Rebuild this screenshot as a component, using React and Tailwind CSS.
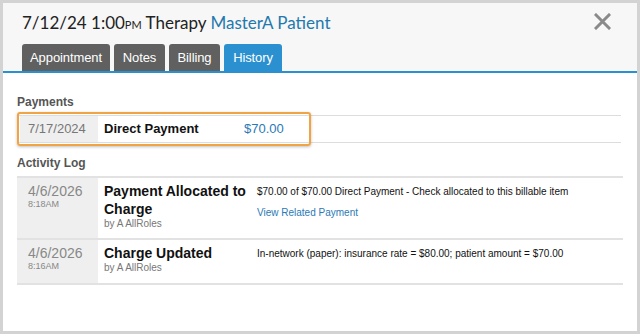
import React from "react";

const tabs = [
  ["Appointment", "w-[88px]"],
  ["Notes", "w-[51px]"],
  ["Billing", "w-[51px]"],
  ["History", "w-[58px]"],
];

export default function App() {
  return (
    <div className="w-[640px] h-[334px] border-[3px] border-[#d3d3d3] bg-white flex flex-col overflow-hidden" style={{ fontFamily: '"Liberation Sans", Arial, sans-serif' }}>
      <div className="bg-[#f7f7f7] h-[70px] shrink-0 border-b-2 border-[#2b90d0] flex flex-col px-[19px] relative">
        <div className="pt-[8px] h-[41px] text-[17px] text-[#222] leading-[24px]" style={{ fontFamily: 'Lato, sans-serif' }}>
          7/12/24 1:00<span className="text-[11px]">PM</span> Therapy <span className="text-[#2379ad]">MasterA Patient</span>
        </div>
        <div className="flex gap-[4px] items-end h-[27px]">
          {tabs.map(([t, w]) => (
            <div
              key={t}
              className={`${w} h-[27px] rounded-t-[3px] text-white text-[13px] tracking-[-0.1px] flex items-center justify-center ${t === "History" ? "bg-[#2b90d0]" : "bg-[#606060]"}`}
            >
              {t}
            </div>
          ))}
        </div>
        <svg className="absolute right-[26px] top-[10px]" width="17" height="17" viewBox="0 0 17 17">
          <path d="M2 2 L15 15 M15 2 L2 15" stroke="#8a8a8a" strokeWidth="3" strokeLinecap="square" />
        </svg>
      </div>
      <div className="px-[14px] pt-[22px]">
        <div className="text-[12px] font-bold text-[#555] leading-[14px]">Payments</div>
        <div className="relative mt-[6px] mr-[300px]">
          <div className="border-t border-b border-[#ddd] flex h-[28px] items-center text-[13px] mr-[-298px]">
            <div className="w-[78px] h-full bg-[#efefef] text-[#777] pl-[8px] flex items-center ml-[3px]">7/17/2024</div>
            <div className="w-[146px] pl-[6px] font-bold text-[#111]">Direct Payment</div>
            <div className="text-[#2a7ab5]">$70.00</div>
          </div>
          <div className="absolute left-0 top-[-3px] bottom-[-3px] w-[294px] border-2 border-[#f0a443] rounded-[3px] shadow-[0_1px_3px_rgba(0,0,0,0.25)]" />
        </div>
        <div className="mt-[13px] text-[12px] font-bold text-[#555] leading-[14px]">Activity Log</div>
        <div className="mt-[6px] border-t-2 border-[#e2e2e2]">
          <div className="flex border-b-2 border-[#e2e2e2] h-[62px]">
            <div className="w-[81px] bg-[#efefef] pl-[11px] pt-[5px]">
              <div className="text-[14px] text-[#888] leading-[16px]">4/6/2026</div>
              <div className="text-[9px] text-[#888] leading-[11px]">8:18AM</div>
            </div>
            <div className="w-[159px] pl-[6px] pt-[4px]">
              <div className="text-[14px] font-bold text-[#111] leading-[18px]">Payment Allocated to Charge</div>
              <div className="text-[10px] text-[#777] leading-[12px]">by A AllRoles</div>
            </div>
            <div className="pt-[8px] text-[10px]">
              <div className="text-[#111] leading-[12px]">$70.00 of $70.00 Direct Payment - Check allocated to this billable item</div>
              <div className="text-[#2a7ab5] leading-[12px] mt-[9px]">View Related Payment</div>
            </div>
          </div>
          <div className="flex border-b-2 border-[#e2e2e2] h-[45px]">
            <div className="w-[81px] bg-[#efefef] pl-[11px] pt-[5px]">
              <div className="text-[14px] text-[#888] leading-[16px]">4/6/2026</div>
              <div className="text-[9px] text-[#888] leading-[11px]">8:16AM</div>
            </div>
            <div className="w-[159px] pl-[6px] pt-[4px]">
              <div className="text-[14px] font-bold text-[#111] leading-[18px]">Charge Updated</div>
              <div className="text-[10px] text-[#777] leading-[12px]">by A AllRoles</div>
            </div>
            <div className="pt-[8px] text-[10px] text-[#111] leading-[12px]">
              In-network (paper): insurance rate = $80.00; patient amount = $70.00
            </div>
          </div>
        </div>
      </div>
    </div>
  );
}
